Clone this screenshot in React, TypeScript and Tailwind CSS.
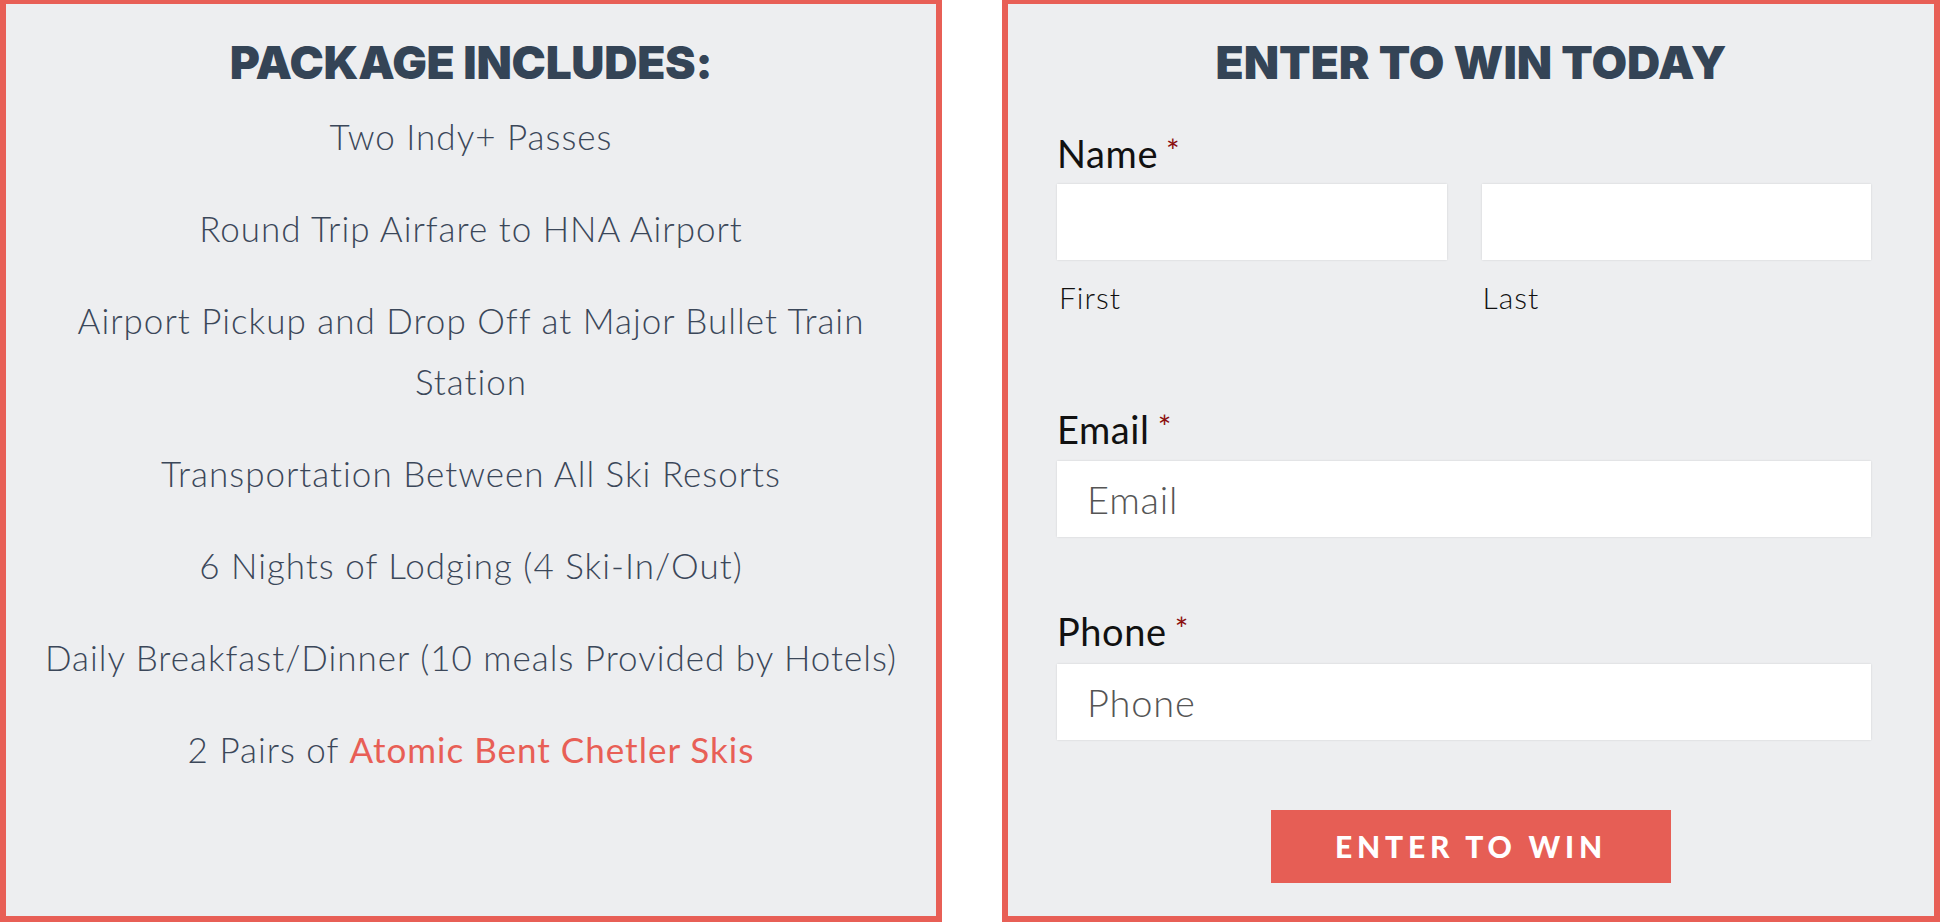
import React from "react";

const items = [
  "Two Indy+ Passes",
  "Round Trip Airfare to HNA Airport",
  "Transportation Between All Ski Resorts",
  "6 Nights of Lodging (4 Ski-In/Out)",
  "Daily Breakfast/Dinner (10 meals Provided by Hotels)",
];

function Label({ text }: { text: string }) {
  return (
    <div className="flex items-start h-[40px] leading-[40px] text-[38px] text-[#111] font-normal tracking-[0.6px]">
      {text}
      <span className="ml-[8px] mt-[2px] text-[32px] leading-[32px] text-[#8b0d0d]">*</span>
    </div>
  );
}

function Field({ placeholder }: { placeholder?: string }) {
  return (
    <input
      type="text"
      placeholder={placeholder}
      className="w-full h-[76px] bg-white px-[30px] text-[38px] font-light tracking-[0.8px] text-[#444] placeholder:text-[#555] outline-none shadow-[0_0_2px_rgba(0,0,0,0.12)]"
    />
  );
}

export default function App() {
  return (
    <main className="flex justify-between h-[922px] bg-white font-['Lato',sans-serif]">
      {/* package */}
      <section className="w-[942px] h-full bg-[#edeef0] border-[#e85f56] border-x-[6px] border-b-[6px] border-t-[4px] flex flex-col items-center pt-[30px]">
        <h2 className="h-[56px] leading-[56px] text-[46px] font-black font-['Inter',sans-serif] text-[#344456] tracking-[-0.3px]">
          PACKAGE INCLUDES:
        </h2>
        <div className="mt-[16px] flex flex-col items-center text-center text-[#3b4759] text-[35px] font-light leading-[61px] tracking-[1px] whitespace-nowrap">
          <p className="mb-[31px]">{items[0]}</p>
          <p className="mb-[31px]">{items[1]}</p>
          <p className="mb-[31px]">
            Airport Pickup and Drop Off at Major Bullet Train
            <br />
            Station
          </p>
          <p className="mb-[31px]">{items[2]}</p>
          <p className="mb-[31px]">{items[3]}</p>
          <p className="mb-[31px]">{items[4]}</p>
          <p>
            2 Pairs of <span className="text-[#e85f56] font-normal">Atomic Bent Chetler Skis</span>
          </p>
        </div>
      </section>

      {/* form */}
      <section className="w-[938px] h-full bg-[#edeef0] border-[#e85f56] border-x-[6px] border-b-[6px] border-t-[4px] flex flex-col pt-[30px] pl-[49px] pr-[63px]">
        <h2 className="h-[56px] leading-[56px] text-center pl-[14px] text-[46px] font-black font-['Inter',sans-serif] text-[#344456] tracking-[0px]">
          ENTER TO WIN TODAY
        </h2>

        <div className="mt-[43px]">
          <Label text="Name" />
        </div>
        <div className="mt-[11px] grid grid-cols-2 gap-[35px]">
          <div>
            <Field />
            <div className="mt-[22px] h-[30px] leading-[30px] pl-[2px] text-[30px] font-light text-[#111] tracking-[1px]">First</div>
          </div>
          <div>
            <Field />
            <div className="mt-[22px] h-[30px] leading-[30px] pl-[1px] text-[30px] font-light text-[#111] tracking-[1px]">Last</div>
          </div>
        </div>

        <div className="mt-[97px]">
          <Label text="Email" />
        </div>
        <div className="mt-[12px]">
          <Field placeholder="Email" />
        </div>

        <div className="mt-[74px]">
          <Label text="Phone" />
        </div>
        <div className="mt-[13px]">
          <Field placeholder="Phone" />
        </div>

        <div className="mt-[70px] flex justify-center pl-[14px]">
          <button
            type="button"
            className="w-[400px] h-[73px] bg-[#e65e55] text-white text-[30px] font-black tracking-[0.16em]"
          >
            ENTER TO WIN
          </button>
        </div>
      </section>
    </main>
  );
}
